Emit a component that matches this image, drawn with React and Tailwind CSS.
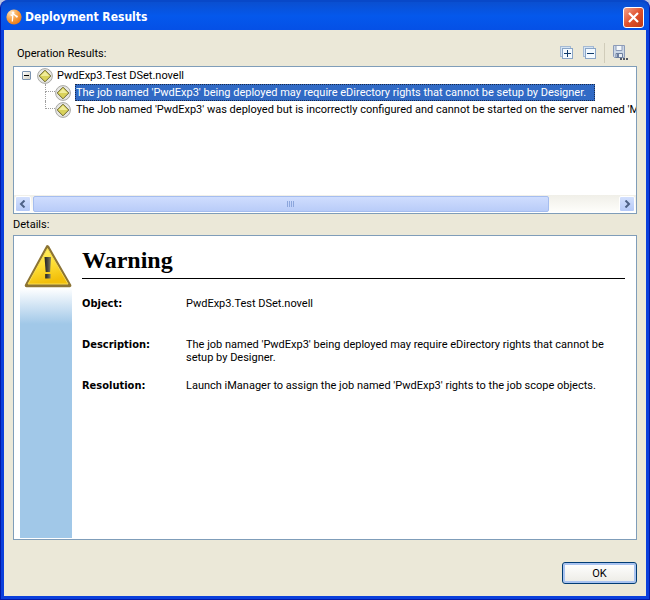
import React, { useState } from 'react';

const results = [
    {
        label: "The job named 'PwdExp3' being deployed may require eDirectory rights that cannot be setup by Designer.",
    },
    {
        label: "The Job named 'PwdExp3' was deployed but is incorrectly configured and cannot be started on the server named 'MA",
    },
];

const details = [
    { term: 'Object:', text: 'PwdExp3.Test DSet.novell', row: 'min-h-[41px]' },
    {
        term: 'Description:',
        text: "The job named 'PwdExp3' being deployed may require eDirectory rights that cannot be setup by Designer.",
        row: 'min-h-[41px]',
    },
    {
        term: 'Resolution:',
        text: "Launch iManager to assign the job named 'PwdExp3' rights to the job scope objects.",
        row: 'min-h-[13px]',
    },
];

function AppIcon() {
    return (
        <svg viewBox="0 0 16 16" className="w-4 h-4 shrink-0" aria-hidden="true">
            <defs>
                <radialGradient id="orb" cx="0.3" cy="0.2" r="0.9">
                    <stop offset="0" stopColor="#FFE3B8" />
                    <stop offset="0.5" stopColor="#F7A44A" />
                    <stop offset="1" stopColor="#E8740F" />
                </radialGradient>
            </defs>
            <circle cx="8" cy="8" r="7.6" fill="url(#orb)" />
            <path d="M7 3.5L6.3 12.5M7 4.5l3.6 3M6.8 7L4.6 5.6" stroke="#fff" strokeWidth="1.3" fill="none" />
            <circle cx="7" cy="3.8" r="1.4" fill="#fff" />
            <circle cx="10.8" cy="7.6" r="1.1" fill="#fff" />
        </svg>
    );
}

function DiamondIcon() {
    return (
        <svg viewBox="0 0 16 16" className="w-4 h-4 shrink-0" aria-hidden="true">
            <circle cx="8" cy="8" r="7.4" fill="#E6E6E2" stroke="#A8A8A4" strokeWidth="1" />
            <path d="M8 2.2L13.8 8 8 13.8 2.2 8z" fill="#D9D25A" stroke="#6B6530" strokeWidth="1" />
            <path d="M8 3.6L12.4 8H3.6z" fill="#F0EC9A" />
        </svg>
    );
}

function WarningIcon() {
    return (
        <svg viewBox="0 0 48 44" className="block w-12 h-11" aria-hidden="true">
            <defs>
                <linearGradient id="warn" x1="0" y1="0" x2="0.3" y2="1">
                    <stop offset="0" stopColor="#FFF06A" />
                    <stop offset="0.5" stopColor="#FFE23A" />
                    <stop offset="1" stopColor="#F2BF0A" />
                </linearGradient>
                <linearGradient id="mark" x1="0" y1="0" x2="1" y2="0">
                    <stop offset="0" stopColor="#22221F" />
                    <stop offset="0.5" stopColor="#4A4A42" />
                    <stop offset="1" stopColor="#8A8560" />
                </linearGradient>
            </defs>
            <path d="M23.5 3L45.5 41.5H2.5z" fill="#8C7434" stroke="#8C7434" strokeWidth="3.6" strokeLinejoin="round" />
            <path d="M23.5 4.5L44 40H4z" fill="url(#warn)" stroke="#F8DC50" strokeWidth="1" strokeLinejoin="round" />
            <path d="M20.5 13h6.6l-1 15h-4.4z" fill="url(#mark)" />
            <rect x="21.2" y="30" width="5.4" height="4.5" fill="url(#mark)" />
        </svg>
    );
}

function BoxesIcon({ plus }) {
    return (
        <svg viewBox="0 0 14 14" className="w-3.5 h-3.5" shapeRendering="crispEdges" aria-hidden="true">
            <rect x="0.5" y="0.5" width="10" height="10" fill="#D5E4F4" stroke="#A5BAD3" />
            <rect x="2.5" y="2.5" width="10" height="10" fill="#F4FAFF" stroke="#8AA5C6" />
            <path d="M4 7h7v1H4z" fill="#103C6C" />
            {plus && <path d="M7 4h1v7H7z" fill="#103C6C" />}
        </svg>
    );
}

function SaveIcon() {
    return (
        <svg viewBox="0 0 16 16" className="w-4 h-4" aria-hidden="true">
            <path d="M1.5 0.5h11v12h-10l-1-1z" fill="#CBD7E6" stroke="#8C9BB8" />
            <path d="M4 0.5h6v5H4z" fill="#F5F8FB" stroke="#8C9BB8" strokeWidth="1" />
            <path d="M4 8.5h6.5v4H4z" fill="#E9EEF4" stroke="#6D7F9F" strokeWidth="1" />
            <path d="M5 9h2v3H5z" fill="#6D7F9F" />
            <path d="M8 13h2v2H8zM11 13h2v2h-2zM14 13h2v2h-2z" fill="#515866" />
        </svg>
    );
}

function ScrollButton({ label, d }) {
    return (
        <button
            type="button"
            aria-label={label}
            className="flex items-center justify-center w-4 h-4 shrink-0 rounded-xs border border-white bg-linear-to-b from-[#D3E0FD] to-[#B5C9F7]"
        >
            <svg viewBox="0 0 8 8" className="w-2 h-2" aria-hidden="true">
                <path d={d} fill="none" stroke="#4D6185" strokeWidth="2" />
            </svg>
        </button>
    );
}

export default function App() {
    const [expanded, setExpanded] = useState(true);
    const [selected, setSelected] = useState(0);

    return (
        <div className="bg-[#B9C4E4]">
            <div className="min-h-screen flex flex-col rounded-t-lg bg-[#0A3FDC] border-x border-b border-[#0019A8] font-['Roboto',sans-serif] text-[11px] leading-[13px] text-black">
                {/* Title bar */}
                <header className="flex items-center h-[30px] px-[5px] pt-0.5 rounded-t-lg bg-linear-to-b from-[#0A4FD0] via-[#0458EC] to-[#0550E6] border-t-2 border-[#0848C8]">
                    <AppIcon />
                    <h1 className="flex-1 ml-[3px] font-['DejaVu_Sans_Condensed','DejaVu_Sans',sans-serif] text-[12px] leading-4 font-bold text-white">
                        Deployment Results
                    </h1>
                    <button
                        type="button"
                        aria-label="Close"
                        className="flex items-center justify-center w-[21px] h-[21px] rounded-[3px] border border-white bg-linear-to-br from-[#F0A088] via-[#E0502C] to-[#C03A14]"
                    >
                        <svg viewBox="0 0 13 13" className="w-[13px] h-[13px]" aria-hidden="true">
                            <path d="M2 2l9 9M11 2l-9 9" stroke="#fff" strokeWidth="2.2" />
                        </svg>
                    </button>
                </header>

                <main className="flex-1 flex flex-col mx-[3px] mb-[3px] px-[9px] pt-2.5 pb-3 bg-[#EBE8D8]">
                    {/* Label and tree tools */}
                    <div className="flex items-center h-[26px] pl-1 pr-[9px]">
                        <h2 className="flex-1">Operation Results:</h2>
                        <div className="flex items-center h-5">
                            <button type="button" aria-label="Expand all" className="mr-[9px]">
                                <BoxesIcon plus />
                            </button>
                            <button type="button" aria-label="Collapse all">
                                <BoxesIcon />
                            </button>
                            <span className="w-px h-5 mx-[7px] bg-[#D0CCBA]" />
                            <button type="button" aria-label="Save results">
                                <SaveIcon />
                            </button>
                        </div>
                    </div>

                    {/* Results tree */}
                    <section className="flex flex-col h-[148px] bg-white border border-[#7F9DB9]">
                        <ul className="flex-1 overflow-hidden whitespace-nowrap">
                            <li>
                                <div className="flex items-center h-[17px] pl-2">
                                    <button
                                        type="button"
                                        aria-label={expanded ? 'Collapse' : 'Expand'}
                                        onClick={() => setExpanded(prev => !prev)}
                                        className="flex items-center justify-center w-[9px] h-[9px] mr-1.5 rounded-[1px] border border-[#7B93B0] bg-linear-to-br from-white to-[#D0CDBF]"
                                    >
                                        <span className="w-[5px] h-px bg-black" />
                                    </button>
                                    <DiamondIcon />
                                    <span className="ml-1">PwdExp3.Test DSet.novell</span>
                                </div>
                                {expanded && (
                                    <ul>
                                        {results.map((item, i) => (
                                            <li key={item.label} className="flex items-center h-[17px] pl-[31px]">
                                                <span className="flex flex-col w-2.5 h-full shrink-0">
                                                    <span className="h-2 border-l border-b border-dotted border-[#A0A0A0]" />
                                                    {i < results.length - 1 && (
                                                        <span className="flex-1 border-l border-dotted border-[#A0A0A0]" />
                                                    )}
                                                </span>
                                                <DiamondIcon />
                                                <button
                                                    type="button"
                                                    onClick={() => setSelected(i)}
                                                    className={`h-[17px] ml-1 border border-dotted ${
                                                        selected === i
                                                            ? 'pr-2 bg-[#316AC5] border-[#1A2A4A] text-white'
                                                            : 'border-transparent'
                                                    }`}
                                                >
                                                    {item.label}
                                                </button>
                                            </li>
                                        ))}
                                    </ul>
                                )}
                            </li>
                        </ul>

                        {/* Horizontal scrollbar */}
                        <div className="flex items-center h-[17px] mb-px px-px bg-linear-to-b from-[#F0EFE8] to-[#FEFEFB]">
                            <ScrollButton label="Scroll left" d="M5.5 0.5L2 4l3.5 3.5" />
                            <div className="flex-1 flex h-4 ml-0.5">
                                <div className="flex items-center justify-center gap-px w-[88%] h-4 rounded-xs border border-[#A5BDEF] bg-linear-to-b from-[#CFDDFE] to-[#B9CCF8]">
                                    {[0, 1, 2, 3].map(n => (
                                        <span key={n} className="w-px h-1.5 bg-[#8CA6DC]" />
                                    ))}
                                </div>
                            </div>
                            <ScrollButton label="Scroll right" d="M2.5 0.5L6 4 2.5 7.5" />
                        </div>
                    </section>

                    <h2 className="mt-1 mb-1">Details:</h2>

                    {/* Details of the selected result */}
                    <section className="flex-1 flex bg-white border border-[#7F9DB9] pl-1.5 pr-[11px] pt-2 pb-px">
                        <div className="flex flex-col w-[52px] shrink-0">
                            <div className="ml-1">
                                <WarningIcon />
                            </div>
                            <div className="flex-1 flex flex-col bg-[#A1C8E8]">
                                <div className="h-9 bg-linear-to-b from-white to-[#A1C8E8]" />
                            </div>
                        </div>
                        <div className="flex-1 ml-2.5">
                            <h3 className="pt-0.5 pb-1 border-b border-black font-['Liberation_Serif',serif] text-[24px] leading-7 font-bold">
                                Warning
                            </h3>
                            <dl className="mt-[18px]">
                                {details.map(item => (
                                    <div key={item.term} className={`flex ${item.row}`}>
                                        <dt className="w-[104px] shrink-0 font-['DejaVu_Sans_Condensed','DejaVu_Sans',sans-serif] font-bold">
                                            {item.term}
                                        </dt>
                                        <dd className="flex-1 pr-3">{item.text}</dd>
                                    </div>
                                ))}
                            </dl>
                        </div>
                    </section>

                    <div className="flex justify-end mt-[22px]">
                        <button
                            type="button"
                            className="w-[75px] h-[22px] rounded-[3px] border border-[#003C74] bg-linear-to-b from-white to-[#ECEBE5] shadow-[inset_0_0_0_2px_#A9C3F0]"
                        >
                            OK
                        </button>
                    </div>
                </main>
            </div>
        </div>
    );
}
